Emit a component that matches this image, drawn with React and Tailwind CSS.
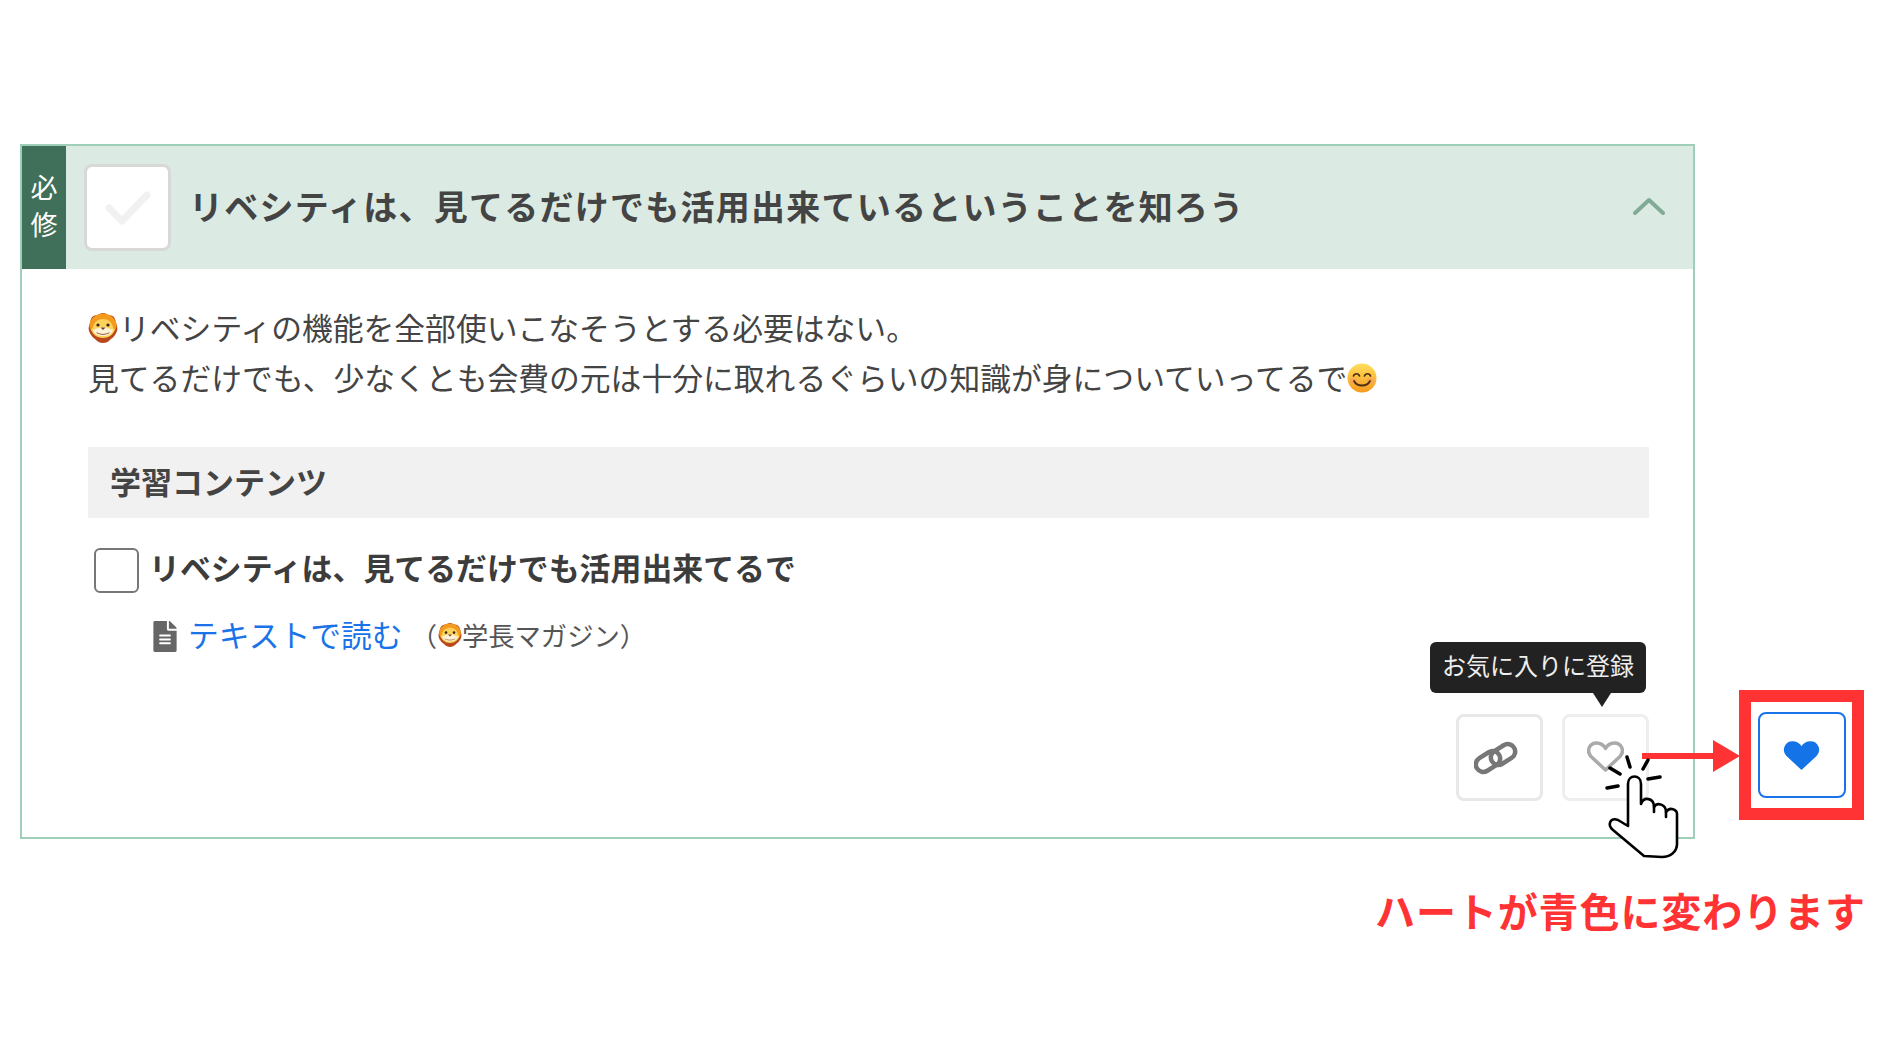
import React from 'react';
import { FaFileAlt } from 'react-icons/fa';

const font = { fontFamily: '"Noto Sans CJK JP", "Noto Sans", sans-serif' };

const Lion = ({ className }) => (
  <svg viewBox="0 0 30 32" className={className}>
    <path d="M15 1c3 0 4 2 6 2s5 1 6 4 1 4 2 7 0 6-2 9-3 3-5 5-4 3-7 3-5-1-7-3-3-2-5-5-3-6-2-9 1-4 2-7 4-4 6-4 3-2 6-2z" fill="#b9491c" />
    <path d="M15 1.500c7 0 13.500 5 13.500 12 0 2-1 4-2.500 6H4c-1.500-2-2.500-4-2.500-6C1.500 6.500 8 1.500 15 1.500z" fill="#f39a1f" />
    <path d="M15 7c5 0 9 3 10 8 .3 1.500 1 2 2 2-1 5-6 9-12 9S4 22 3 17c1 0 1.700-.500 2-2 1-5 5-8 10-8z" fill="#fbd35a" />
    <path d="M5 18c3-1 6-3 10-3s7 2 10 3c-1 4-5 6-10 6S6 22 5 18z" fill="#fdf1d6" />
    <circle cx="10" cy="13" r="1.6" fill="#3a2410" />
    <circle cx="20" cy="13" r="1.6" fill="#3a2410" />
    <path d="M12.500 15.500h5L15 18z" fill="#7b3a12" />
    <path d="M8 20c4 2.500 10 2.500 14 0-2 3.500-12 3.500-14 0z" fill="#7b3a12" />
  </svg>
);

const Smile = ({ className }) => (
  <svg viewBox="0 0 30 30" className={className}>
    <defs>
      <linearGradient id="smileFace" x1="0" y1="0" x2="0" y2="1">
        <stop offset="0" stopColor="#ffdf5c" />
        <stop offset="1" stopColor="#f79a1e" />
      </linearGradient>
    </defs>
    <circle cx="15" cy="15" r="14.500" fill="url(#smileFace)" />
    <circle cx="6.500" cy="18" r="3.500" fill="#f9a060" opacity="0.7" />
    <circle cx="23.500" cy="18" r="3.500" fill="#f9a060" opacity="0.7" />
    <path d="M6.500 13c1-3 5-3 6 0M17.500 13c1-3 5-3 6 0" fill="none" stroke="#4a2f12" strokeWidth="1.7" strokeLinecap="round" />
    <path d="M7 18c3 6 13 6 16 0" fill="none" stroke="#4a2f12" strokeWidth="1.8" strokeLinecap="round" />
  </svg>
);

const HeartPath = 'M18.5 29 L4 15.5 C-1 10 2.5 2 9.5 2 C13 2 16.5 4 18.5 7.5 C20.5 4 24 2 27.5 2 C34.5 2 38 10 33 15.5 Z';

const ChainIcon = () => (
  <svg viewBox="0 0 44 34" className="mr-[8px] h-[34px] w-[44px]" fill="none" stroke="#777" strokeWidth="4.5">
    <rect x="1" y="13" width="26" height="15" rx="7.5" transform="rotate(-32 14 20.5)" />
    <rect x="16" y="6" width="26" height="15" rx="7.5" transform="rotate(-32 29 13.5)" />
  </svg>
);

// Cursor and the ticks round its fingertip
const Pointer = () => (
  <svg viewBox="0 0 90 112" className="absolute left-[1600px] top-[750px] h-[112px] w-[90px]" fill="none" stroke="#000" strokeLinecap="round" strokeLinejoin="round">
    <g strokeWidth="3.5">
      <path d="M10 18l10 6M27 7l3 10M48 10l-5 9M48 29l12-2M7 38l11-2" />
    </g>
    <path
      d="M28 76V34c0-10 13-10 13 0v20c3-8 13-6 13 3 3-5 12-3 12 5 4-6 11-2 11 2v30c0 8-7 13-15 13l-18-1-31-26c-6-5-3-13 5-10z"
      fill="#fff"
      strokeWidth="2.6"
    />
    <path d="M54 57v5M66 62v5" strokeWidth="2.6" />
  </svg>
);

const App = () => {
  return (
    <div className="relative h-[1063px] w-[1890px] overflow-hidden bg-white pl-[20px] pt-[144px] text-[#444]" style={font}>
      <div className="w-[1675px] border-2 border-[#9fcfb8] bg-white">
        {/* Header */}
        <div className="flex h-[123px] items-center bg-[#dbebe3]">
          <div className="flex h-full w-[44px] flex-col items-center justify-center bg-[#41705a] pb-[6px] text-[27px] leading-[37px] text-white">
            <span>必</span>
            <span>修</span>
          </div>
          <div className="ml-[18px] flex h-[87px] w-[87px] items-center justify-center rounded-lg border-[3px] border-[#d8d8d8] bg-white">
            <svg viewBox="0 0 46 34" className="h-[34px] w-[46px]" fill="none" stroke="#f1f1f1" strokeWidth="7" strokeLinecap="round" strokeLinejoin="round">
              <path d="M4 17l13 13L42 4" />
            </svg>
          </div>
          <h2 className="mb-[5px] ml-[18px] text-[34px] font-bold tracking-[1.25px] text-[#444]">
            リベシティは、見てるだけでも活用出来ているということを知ろう
          </h2>
          <svg viewBox="0 0 32 18" className="mb-[3px] ml-auto mr-[28px] h-[18px] w-[32px]" fill="none" stroke="#82ab97" strokeWidth="4" strokeLinecap="round" strokeLinejoin="round">
            <path d="M2 16L16 3l14 13" />
          </svg>
        </div>

        {/* Body */}
        <div className="pb-[36px] pl-[66px] pr-[44px] pt-[34px]">
          <p className="flex h-[50px] items-center pb-[2px] text-[30.8px]">
            <Lion className="mr-px mt-[2px] h-[32px] w-[30px]" />
            リベシティの機能を全部使いこなそうとする必要はない。
          </p>
          <p className="flex h-[50px] items-center pb-[2px] text-[30.8px]">
            見てるだけでも、少なくとも会費の元は十分に取れるぐらいの知識が身についていってるで
            <Smile className="mt-[2px] h-[30px] w-[30px]" />
          </p>

          <div className="mt-[44px] flex h-[71px] items-center bg-[#f1f1f1] pb-[3px] pl-[22px] text-[31px] font-bold">
            学習コンテンツ
          </div>

          <div className="ml-[6px] mt-[30px] flex h-[45px] items-center gap-[10px]">
            <div className="h-[45px] w-[45px] rounded-md border-2 border-[#777]" />
            <span className="mb-[7px] text-[30.9px] font-bold text-[#3c3c3c]">リベシティは、見てるだけでも活用出来てるで</span>
          </div>

          <div className="ml-[65px] mt-[23px] flex h-[40px] items-center">
            <FaFileAlt className="h-[31px] w-[24px] text-[#666]" />
            <a className="mb-[4px] ml-[11px] text-[30.8px] text-[#1a73e8]">テキストで読む</a>
            <span className="mb-[3px] ml-[8px] flex items-center text-[26.3px] text-[#555]">
              （
              <Lion className="ml-[1px] h-[26px] w-[24px]" />
              学長マガジン）
            </span>
          </div>

          <div className="mt-[58px] flex justify-end gap-[19px]">
            <button className="flex h-[87px] w-[87px] items-center justify-center rounded-lg border-[3px] border-[#e8e8e8]">
              <ChainIcon />
            </button>
            <button className="relative flex h-[87px] w-[87px] items-center justify-center rounded-lg border-[3px] border-[#eee]">
              <svg viewBox="0 0 37 31" className="mb-[3px] h-[31px] w-[37px]">
                <path d={HeartPath} fill="#fff" stroke="#aaa" strokeWidth="3.5" strokeLinejoin="round" />
              </svg>
              <div className="absolute bottom-[105px] right-0 flex h-[51px] w-[216px] items-center justify-center rounded-md bg-[#222] pb-[6px] text-[24px] text-[#eee]">
                お気に入りに登録
                <span className="absolute left-[163px] top-full h-0 w-0 border-x-[9px] border-t-[14px] border-x-transparent border-t-[#222]" />
              </div>
            </button>
          </div>
        </div>
      </div>

      {/* Annotation: click turns the heart blue */}
      <div className="absolute left-[1642px] top-[753px] h-[6px] w-[72px] bg-[#ff3333]" />
      <div className="absolute left-[1713px] top-[740px] h-0 w-0 border-y-[16px] border-l-[27px] border-y-transparent border-l-[#ff3333]" />
      <div className="absolute left-[1739px] top-[690px] flex h-[130px] w-[125px] items-center justify-center border-[12px] border-[#ff3333] bg-white">
        <div className="flex h-[86px] w-[88px] items-center justify-center rounded-lg border-2 border-[#1a73e8]">
          <svg viewBox="0 0 37 31" className="h-[31px] w-[37px] overflow-visible">
            <path d={HeartPath} fill="#1473e6" stroke="#1473e6" strokeWidth="1.5" strokeLinejoin="round" />
          </svg>
        </div>
      </div>
      <Pointer />
      <div className="absolute left-[1375px] top-[880px] whitespace-nowrap text-[40px] font-bold tracking-[0.9px] text-[#ff3333]">
        ハートが青色に変わります
      </div>
    </div>
  );
};

export default App;
